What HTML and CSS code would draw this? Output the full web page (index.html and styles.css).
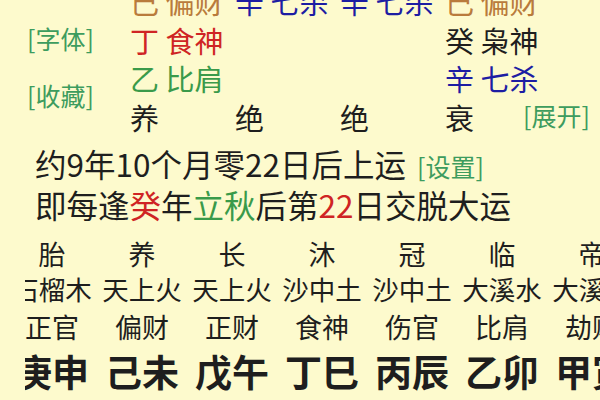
FILE: index.html
```html
<!DOCTYPE html>
<html lang="zh-CN">
<head>
  <meta charset="UTF-8" />
  <title>排盘</title>
  <link rel="stylesheet" href="styles.css">
</head>
<body>
  <!-- 四柱：藏干与十神 -->
  <div class="pillars">
    <div class="side">
      <span class="link">[字体]</span>
      <span class="link">[收藏]</span>
    </div>
    <div class="grid">
      <div class="cell c-earth">己 偏财</div>
      <div class="cell c-metal">辛 七杀</div>
      <div class="cell c-metal">辛 七杀</div>
      <div class="cell c-earth">己 偏财</div>

      <div class="cell c-fire">丁 食神</div>
      <div class="cell"></div>
      <div class="cell"></div>
      <div class="cell">癸 枭神</div>

      <div class="cell c-wood">乙 比肩</div>
      <div class="cell"></div>
      <div class="cell"></div>
      <div class="cell c-metal">辛 七杀</div>

      <div class="cell">养</div>
      <div class="cell">绝</div>
      <div class="cell">绝</div>
      <div class="cell last">衰 <span class="link">[展开]</span></div>
    </div>
  </div>

  <!-- 起运信息 -->
  <div class="luck">
    <p>约9年10个月零22日后上运 <span class="link">[设置]</span></p>
    <p>即每逢<span class="c-fire">癸</span>年<span class="c-wood">立秋</span>后第<span class="c-fire">22</span>日交脱大运</p>
  </div>

  <!-- 大运（横向滚动） -->
  <div class="dayun">
    <div class="track">
      <div class="row stage">
        <span>胎</span><span>养</span><span>长</span><span>沐</span><span>冠</span><span>临</span><span>帝</span>
      </div>
      <div class="row nayin">
        <span>石榴木</span><span>天上火</span><span>天上火</span><span>沙中土</span><span>沙中土</span><span>大溪水</span><span>大溪水</span>
      </div>
      <div class="row god">
        <span>正官</span><span>偏财</span><span>正财</span><span>食神</span><span>伤官</span><span>比肩</span><span>劫财</span>
      </div>
      <div class="row ganzhi">
        <span>庚申</span><span>己未</span><span>戊午</span><span>丁巳</span><span>丙辰</span><span>乙卯</span><span>甲寅</span>
      </div>
    </div>
  </div>
</body>
</html>
```

FILE: styles.css
```css
/* 排盘页面：浅黄底色 */
:root {
  --bg: #fdfacd;
  --ink: #1e1e1e;
  --link: #3d9c5e;
  --earth: #b97b3c;
  --metal: #1d1da3;
  --fire: #cf2424;
  --wood: #3a9a4a;
}

html, body {
  margin: 0;
  height: 100%;
}
body {
  background: var(--bg);
  color: var(--ink);
  font-family: "Noto Sans CJK SC", "Noto Sans", sans-serif;
  overflow: hidden;
}

.link {
  color: var(--link);
  font-size: 25px;
}

/* 四柱 */
.pillars {
  display: flex;
  margin-top: -18px;
}
.side {
  width: 130px;
  box-sizing: border-box;
  padding: 41px 0 0 27px;
  display: flex;
  flex-direction: column;
  gap: 27px;
}
.side .link {
  line-height: 30px;
}
.grid {
  flex: 1;
  display: grid;
  grid-template-columns: 105px 105px 105px 1fr;
  grid-auto-rows: 38.5px;
}
.cell {
  font-size: 29px;
  line-height: 38.5px;
  white-space: nowrap;
}
.cell.last {
  display: flex;
  justify-content: space-between;
  align-items: center;
  padding-right: 10px;
}
.cell.last .link {
  margin-top: -3px;
}

.c-earth { color: var(--earth); }
.c-metal { color: var(--metal); }
.c-fire  { color: var(--fire); }
.c-wood  { color: var(--wood); }

/* 起运 */
.luck {
  margin-top: 7px;
  padding-left: 35px;
}
.luck p {
  margin: 0;
  font-size: 31.5px;
  line-height: 40px;
  white-space: nowrap;
}
.luck p + p {
  margin-top: -2px;
}
.luck .link {
  margin-left: 4px;
}

/* 大运 */
.dayun {
  margin: 13px 0 0 25px;
  overflow: hidden;
}
.track {
  margin-left: -18px;
}
.row {
  display: grid;
  grid-template-columns: repeat(7, 90px);
  text-align: center;
  white-space: nowrap;
}
.stage  { font-size: 27px; line-height: 33px; }
.nayin  { font-size: 26.5px; line-height: 38px; }
.god    { font-size: 27px; line-height: 38px; }
.ganzhi { font-size: 37px; line-height: 50px; font-weight: 700; }
```
